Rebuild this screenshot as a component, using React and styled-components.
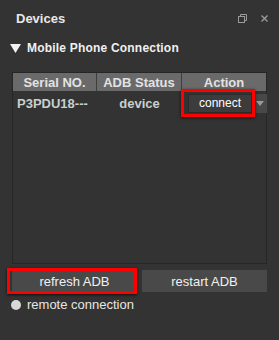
import React from "react";
import styled, { createGlobalStyle } from "styled-components";

const GlobalStyle = createGlobalStyle`
  body {
    margin: 0;
    background: #333333;
    font-family: "Liberation Sans", Arial, sans-serif;
  }
`;

const Panel = styled.div`
  width: 279px;
  height: 340px;
  background: #333333;
  color: #e6e6e6;
  display: flex;
  flex-direction: column;
  overflow: hidden;
`;

const TitleBar = styled.div`
  height: 36px;
  display: flex;
  align-items: center;
  padding: 0 11px 0 16px;
  font-size: 13px;
  font-weight: bold;
  color: #e8e8e8;
  span {
    flex: 1;
  }
`;

const TitleIcons = styled.div`
  display: flex;
  align-items: center;
  gap: 14px;
`;

const SectionHead = styled.div`
  display: flex;
  align-items: center;
  gap: 6px;
  padding-left: 10px;
  height: 24px;
  font-size: 12px;
  font-weight: bold;
  letter-spacing: 0.2px;
  color: #f0f0f0;
`;

const Table = styled.div`
  margin: 12px 12px 0 12px;
  height: 190px;
  border: 1px solid #262626;
  background: #333333;
  display: flex;
  flex-direction: column;
`;

const Row = styled.div`
  display: grid;
  grid-template-columns: 84px 85px 1fr;
  height: ${(p) => p.height}px;
  align-items: center;
`;

const HeadCell = styled.div`
  height: 100%;
  background: #6a6a6a;
  color: #e2e2e2;
  font-size: 13px;
  font-weight: bold;
  display: flex;
  align-items: center;
  justify-content: center;
  border-right: ${(p) => (p.last ? "none" : "1px solid #3e3e3e")};
`;

const Cell = styled.div`
  font-size: 13px;
  font-weight: bold;
  color: #c8d0d0;
  display: flex;
  align-items: center;
  justify-content: ${(p) => p.align || "center"};
  padding-left: ${(p) => (p.align ? "4px" : "0")};
`;

const Select = styled.div`
  position: relative;
  display: flex;
  width: 79px;
  height: 19px;
  margin-left: 2px;
`;

const SelectValue = styled.div`
  width: 64px;
  background: #3c3c3c;
  border: 1px solid #2a2a2a;
  box-sizing: border-box;
  color: #ffffff;
  font-size: 12px;
  font-weight: normal;
  display: flex;
  align-items: center;
  justify-content: center;
`;

const SelectArrow = styled.div`
  flex: 1;
  background: #484848;
  display: flex;
  align-items: center;
  justify-content: center;
`;

const Highlight = styled.div`
  position: absolute;
  border: 3px solid #ff0000;
  box-shadow: 0 1px 3px rgba(0, 0, 0, 0.7);
  pointer-events: none;
  top: ${(p) => p.top}px;
  left: ${(p) => p.left}px;
  width: ${(p) => p.w}px;
  height: ${(p) => p.h}px;
  box-sizing: border-box;
`;

const Buttons = styled.div`
  display: grid;
  grid-template-columns: 1fr 1fr;
  gap: 5px;
  margin: 6px 12px 0 12px;
`;

const ButtonWrap = styled.div`
  position: relative;
`;

const Button = styled.button`
  width: 100%;
  height: 22px;
  border: none;
  background: #494949;
  color: #f0f0f0;
  font-family: "Liberation Sans", Arial, sans-serif;
  font-size: 13px;
  padding: 0;
`;

const Remote = styled.label`
  display: flex;
  align-items: center;
  gap: 6px;
  margin: 5px 0 0 11px;
  font-size: 13px;
  color: #e6e6e6;
`;

const Radio = styled.span`
  width: 10px;
  height: 10px;
  border-radius: 50%;
  background: #d8d8d8;
  display: inline-block;
`;

const RestoreIcon = () => (
  <svg width="9" height="9" viewBox="0 0 9 9">
    <rect x="0.5" y="2.5" width="6" height="6" fill="none" stroke="#9a9a9a" />
    <path d="M2.5 2.5V0.5H8.5V6.5H6.5" fill="none" stroke="#9a9a9a" />
  </svg>
);

const CloseIcon = () => (
  <svg width="7" height="7" viewBox="0 0 7 7">
    <path d="M0.5 0.5L6.5 6.5M6.5 0.5L0.5 6.5" stroke="#9a9a9a" strokeWidth="1.4" />
  </svg>
);

const App = () => {
  return (
    <Panel>
      <GlobalStyle />
      <TitleBar>
        <span>Devices</span>
        <TitleIcons>
          <RestoreIcon />
          <CloseIcon />
        </TitleIcons>
      </TitleBar>
      <SectionHead>
        <svg width="11" height="10" viewBox="0 0 11 10">
          <path d="M0 1H11L5.5 10Z" fill="#f2f2f2" />
        </svg>
        Mobile Phone Connection
      </SectionHead>
      <Table>
        <Row height={18}>
          <HeadCell>Serial NO.</HeadCell>
          <HeadCell>ADB Status</HeadCell>
          <HeadCell last>Action</HeadCell>
        </Row>
        <Row height={24}>
          <Cell align="flex-start">P3PDU18---</Cell>
          <Cell>device</Cell>
          <Cell align="flex-start">
            <Select>
              <SelectValue>connect</SelectValue>
              <SelectArrow>
                <svg width="8" height="5" viewBox="0 0 8 5">
                  <path d="M0 0H8L4 5Z" fill="#9a9a9a" />
                </svg>
              </SelectArrow>
              <Highlight top={-5} left={-7} w={74} h={28} />
            </Select>
          </Cell>
        </Row>
      </Table>
      <Buttons>
        <ButtonWrap>
          <Button>refresh ADB</Button>
          <Highlight top={-2} left={-5} w={130} h={26} />
        </ButtonWrap>
        <ButtonWrap>
          <Button>restart ADB</Button>
        </ButtonWrap>
      </Buttons>
      <Remote>
        <Radio />
        remote connection
      </Remote>
    </Panel>
  );
};

export default App;
